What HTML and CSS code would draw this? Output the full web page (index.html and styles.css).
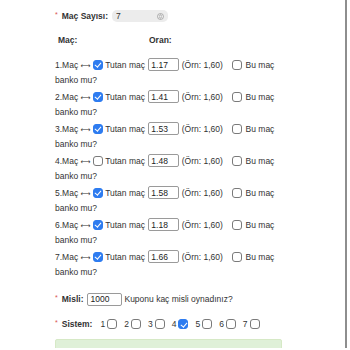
FILE: index.html
```html
<!DOCTYPE html>
<html lang="tr">
<head>
  <meta charset="UTF-8">
  <meta name="viewport" content="width=device-width, initial-scale=1.0">
  <title>Kupon Hesaplama</title>
  <link rel="stylesheet" href="styles.css">
</head>
<body>
  <div class="page">
    <form class="kupon">
      <div class="field">
        <span class="req">*</span>
        <label class="lbl">Maç Sayısı:</label>
        <div class="select-box">
          <select id="macSayisi">
            <option>7</option>
          </select>
          <svg class="updown" width="7" height="7" viewBox="0 0 10 10">
            <circle cx="5" cy="5" r="4.3" fill="none" stroke="#8a8a8a" stroke-width="0.9"/>
            <path d="M3.3 4.2 L5 2.7 L6.7 4.2 M3.3 5.8 L5 7.3 L6.7 5.8" fill="none" stroke="#6a6a6a" stroke-width="0.9"/>
          </svg>
        </div>
      </div>

      <div class="head">
        <span class="col-mac">Maç:</span>
        <span class="col-oran">Oran:</span>
      </div>

      <div id="maclar"></div>

      <div class="field misli">
        <span class="req">*</span>
        <label class="lbl">Misli:</label>
        <input type="text" class="misli-input" value="1000">
        <span>Kuponu kaç misli oynadınız?</span>
      </div>

      <div class="field sistem">
        <span class="req">*</span>
        <label class="lbl">Sistem:</label>
        <span class="sistem-list" id="sistem"></span>
      </div>

      <div class="sonuc"></div>
    </form>
  </div>

  <script>
    const oranlar = ["1.17", "1.41", "1.53", "1.48", "1.58", "1.18", "1.66"];
    const tutanlar = [true, true, true, false, true, true, true];

    const maclar = document.getElementById("maclar");
    maclar.innerHTML = oranlar.map((oran, i) => `
      <div class="mac">
        ${i + 1}.Maç <span class="ok">&#10231;</span>
        <input type="checkbox" class="cb" ${tutanlar[i] ? "checked" : ""}> Tutan maç
        <input type="text" class="oran" value="${oran}"> (Örn: 1,60)
        <input type="checkbox" class="cb banko"> Bu maç banko mu?
      </div>`).join('');

    const sistem = document.getElementById("sistem");
    let html = '';
    for (let i = 1; i <= 7; i++) {
      html += `<span class="sis">${i}<input type="checkbox" class="cb" ${i === 4 ? "checked" : ""}></span>`;
    }
    sistem.innerHTML = html;
  </script>
</body>
</html>
```

FILE: styles.css
```css
html, body {
  margin: 0;
  padding: 0;
  overflow: hidden;
  background: #fff;
}
body {
  font-family: "Liberation Sans", Arial, Helvetica, sans-serif;
  font-size: 8.5px;
  color: #333;
}
.page {
  width: 345px;
  height: 348px;
  border-right: 2px solid #8e8e8e;
  overflow: hidden;
}
.kupon {
  width: 227px;
  margin-left: 55px;
  padding-top: 10px;
}
.field {
  display: flex;
  align-items: center;
  height: 12px;
}
.req {
  color: #d9534f;
  font-size: 7px;
  margin-right: 4px;
  position: relative;
  top: -2px;
}
.lbl {
  font-weight: bold;
  margin-right: 4px;
}
.select-box {
  display: flex;
  align-items: center;
  width: 48px;
  height: 12px;
  padding: 0 4px;
  background: #ececec;
  border-radius: 5px;
}
.select-box select {
  appearance: none;
  -webkit-appearance: none;
  border: none;
  background: transparent;
  font: inherit;
  color: #333;
  padding: 0;
  flex: 1;
  outline: none;
}
.updown {
  flex: none;
}
.head {
  display: flex;
  font-weight: bold;
  margin-top: 13px;
  margin-bottom: 13px;
  line-height: 10px;
  padding-left: 3px;
}
.col-mac {
  width: 91px;
}
.mac {
  line-height: 14px;
  margin-bottom: 3px;
}
.ok {
  font-family: "DejaVu Sans", sans-serif;
  font-size: 7px;
}
.cb {
  appearance: none;
  -webkit-appearance: none;
  width: 10px;
  height: 10px;
  margin: 0;
  border: 1px solid #7a7a7a;
  border-radius: 3px;
  background: #fff;
  vertical-align: middle;
  position: relative;
  top: -1px;
  box-sizing: border-box;
}
.cb:checked {
  background: #2e7cf0;
  border-color: #2e7cf0;
}
.cb:checked::after {
  content: "";
  position: absolute;
  left: 2.5px;
  top: 0.5px;
  width: 2.5px;
  height: 5px;
  border: solid #fff;
  border-width: 0 1.4px 1.4px 0;
  transform: rotate(40deg);
}
.banko {
  margin-left: 7px;
  margin-right: 1px;
}
.oran, .misli-input {
  font: inherit;
  color: #222;
  height: 13px;
  box-sizing: border-box;
  border: 1px solid #9a9a9a;
  border-radius: 2px;
  padding: 0 2px;
  vertical-align: middle;
  position: relative;
  top: -1px;
}
.oran {
  width: 31px;
  margin: 0 0 0 1px;
}
.misli {
  margin-top: 13px;
  height: 14px;
}
.misli-input {
  width: 35px;
  margin-right: 2px;
  top: 0;
}
.sistem {
  margin-top: 12px;
}
.sistem .lbl {
  margin-right: 8px;
}
.sis {
  margin-right: 6px;
}
.sis .cb {
  margin-left: 2px;
  margin-right: 1px;
  top: 0;
}
.sonuc {
  margin-top: 9px;
  height: 40px;
  background: #dff0d8;
  border: 1px solid #d6e9c6;
  border-radius: 2px;
}
```
